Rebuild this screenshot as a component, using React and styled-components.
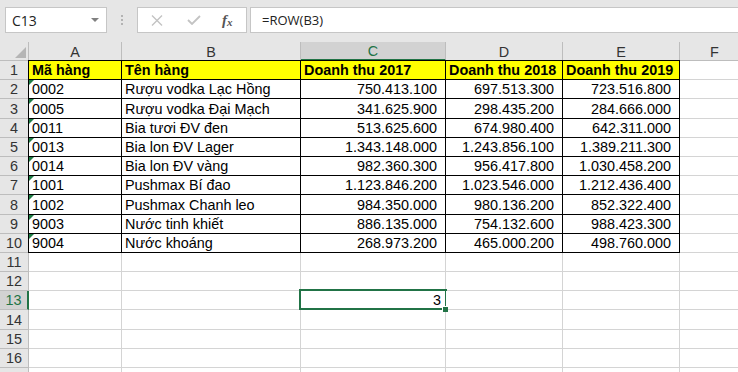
import styled, { createGlobalStyle } from 'styled-components';

const GlobalStyle = createGlobalStyle`
  html, body {
    margin: 0;
    padding: 0;
    background: #ffffff;
    overflow: hidden;
  }
`;

const columns = ['A', 'B', 'C', 'D', 'E', 'F'];
const selectedCol = 'C';
const selectedRow = 13;

const header = ['Mã hàng', 'Tên hàng', 'Doanh thu 2017', 'Doanh thu 2018', 'Doanh thu 2019'];

const data = [
  ['0002', 'Rượu vodka Lạc Hồng', '750.413.100', '697.513.300', '723.516.800'],
  ['0005', 'Rượu vodka Đại Mạch', '341.625.900', '298.435.200', '284.666.000'],
  ['0011', 'Bia tươi ĐV đen', '513.625.600', '674.980.400', '642.311.000'],
  ['0013', 'Bia lon ĐV Lager', '1.343.148.000', '1.243.856.100', '1.389.211.300'],
  ['0014', 'Bia lon ĐV vàng', '982.360.300', '956.417.800', '1.030.458.200'],
  ['1001', 'Pushmax Bí đao', '1.123.846.200', '1.023.546.000', '1.212.436.400'],
  ['1002', 'Pushmax Chanh leo', '984.350.000', '980.136.200', '852.322.400'],
  ['9003', 'Nước tinh khiết', '886.135.000', '754.132.600', '988.423.300'],
  ['9004', 'Nước khoáng', '268.973.200', '465.000.200', '498.760.000'],
];

const TOTAL_ROWS = 17;

export default function App() {
  const rows = [];
  for (let r = 1; r <= TOTAL_ROWS; r++) {
    const inTable = r <= 10;
    const values = r === 1 ? header : data[r - 2] || [];
    rows.push(
      <RowHead key={`h${r}`} $selected={r === selectedRow}>
        {r}
      </RowHead>
    );
    columns.forEach((col, i) => {
      const table = inTable && i < 5;
      let text = values[i] || '';
      let numeric = table && r > 1 && i >= 2;
      const active = r === selectedRow && col === selectedCol;
      if (active) text = '3';
      rows.push(
        <Cell
          key={`${col}${r}`}
          $table={table}
          $yellow={table && r === 1}
          $bold={table && r === 1}
          $firstCol={table && i === 0}
          $firstRow={table && r === 1}
          $warn={table && r > 1 && i === 0}
          $align={numeric ? 'right' : active ? 'active' : 'left'}
          $active={active}
        >
          {text}
        </Cell>
      );
    });
  }

  return (
    <Window>
      <GlobalStyle />
      <FormulaBar>
        <NameBox>
          <span>C13</span>
          <Caret />
        </NameBox>
        <Grip>
          <i />
          <i />
          <i />
        </Grip>
        <ButtonGroup>
          <svg width="12" height="11" viewBox="0 0 12 11">
            <path d="M1 0.5 L11 10.5 M11 0.5 L1 10.5" stroke="#c3c3c3" strokeWidth="1.4" fill="none" />
          </svg>
          <svg width="14" height="10" viewBox="0 0 14 10">
            <path d="M1 5 L5 9 L13 1" stroke="#c3c3c3" strokeWidth="1.8" fill="none" />
          </svg>
          <Fx>
            f<sub>x</sub>
          </Fx>
        </ButtonGroup>
        <FormulaInput>=ROW(B3)</FormulaInput>
      </FormulaBar>

      <Sheet>
        <Corner>
          <svg width="11" height="11" viewBox="0 0 11 11">
            <polygon points="11,0 11,11 0,11" fill="#b5b5b5" />
          </svg>
        </Corner>
        {columns.map((c) => (
          <ColHead key={c} $selected={c === selectedCol}>
            {c}
          </ColHead>
        ))}
        {rows}
      </Sheet>
    </Window>
  );
}

const green = '#217346';
const headerLine = '#bdbdbd';
const gridLine = '#d4d4d4';

const Window = styled.div`
  width: 738px;
  height: 372px;
  overflow: hidden;
  display: flex;
  flex-direction: column;
  background: #ffffff;
`;

const FormulaBar = styled.div`
  height: 42px;
  flex: none;
  display: flex;
  align-items: flex-start;
  padding: 7px 0 0 5px;
  box-sizing: border-box;
  background: #e6e6e6;
  font-family: 'Open Sans', 'Liberation Sans', sans-serif;
  font-size: 13px;
  color: #222;
`;

const NameBox = styled.div`
  width: 102px;
  height: 26px;
  box-sizing: border-box;
  border: 1px solid #c6c6c6;
  background: #fff;
  display: flex;
  align-items: center;
  justify-content: space-between;
  padding: 0 7px 0 6px;
  font-size: 14px;
`;

const Caret = styled.span`
  width: 0;
  height: 0;
  border-left: 4px solid transparent;
  border-right: 4px solid transparent;
  border-top: 4px solid #808080;
`;

const Grip = styled.div`
  margin: 8px 14px 0 14px;
  display: flex;
  flex-direction: column;
  gap: 2px;

  i {
    display: block;
    width: 2px;
    height: 2px;
    background: #b3b3b3;
  }
`;

const ButtonGroup = styled.div`
  width: 110px;
  height: 26px;
  box-sizing: border-box;
  border: 1px solid #c6c6c6;
  background: #fff;
  display: flex;
  align-items: center;
  padding: 0 0 0 13px;
  gap: 0;

  svg:nth-child(1) {
    margin-right: 24px;
  }
  svg:nth-child(2) {
    margin-right: 21px;
  }
`;

const Fx = styled.span`
  font-family: 'Liberation Serif', serif;
  font-style: italic;
  font-weight: bold;
  font-size: 15px;
  color: #555;
  line-height: 1;

  sub {
    font-size: 11px;
    vertical-align: -1px;
  }
`;

const FormulaInput = styled.div`
  flex: 1;
  height: 26px;
  margin-left: 3px;
  box-sizing: border-box;
  border: 1px solid #c6c6c6;
  border-right: none;
  background: #fff;
  display: flex;
  align-items: center;
  padding-left: 11px;
`;

const Sheet = styled.div`
  display: grid;
  grid-template-columns: 29px 93px 179px 145px 117px 117px 70px;
  grid-template-rows: 19px repeat(${TOTAL_ROWS}, 19.2px);
  width: 750px;
  font-family: 'Liberation Sans', Arial, sans-serif;
  font-size: 14.4px;
  color: #000;
`;

const Corner = styled.div`
  background: #e6e6e6;
  border-right: 1px solid ${headerLine};
  border-bottom: 1px solid ${headerLine};
  box-sizing: border-box;
  display: flex;
  align-items: flex-end;
  justify-content: flex-end;
  padding: 0 2px 2px 0;
`;

const ColHead = styled.div`
  box-sizing: border-box;
  background: ${(p) => (p.$selected ? '#d2d2d2' : '#e6e6e6')};
  color: ${(p) => (p.$selected ? green : '#333')};
  border-right: 1px solid ${headerLine};
  border-bottom: ${(p) => (p.$selected ? `2px solid ${green}` : `1px solid ${headerLine}`)};
  display: flex;
  align-items: center;
  justify-content: center;
  padding-top: 1px;
  line-height: 16px;
`;

const RowHead = styled.div`
  box-sizing: border-box;
  background: ${(p) => (p.$selected ? '#d2d2d2' : '#e6e6e6')};
  color: ${(p) => (p.$selected ? green : '#333')};
  border-right: ${(p) => (p.$selected ? `2px solid ${green}` : `1px solid ${headerLine}`)};
  border-bottom: 1px solid ${headerLine};
  display: flex;
  align-items: flex-end;
  justify-content: center;
  line-height: 17px;
`;

const Cell = styled.div`
  position: relative;
  box-sizing: border-box;
  min-width: 0;
  overflow: visible;
  white-space: nowrap;
  background: ${(p) => (p.$yellow ? '#ffff00' : '#ffffff')};
  border-right: 1px solid ${(p) => (p.$table ? '#000' : gridLine)};
  border-bottom: 1px solid ${(p) => (p.$table ? '#000' : gridLine)};
  box-shadow: ${(p) =>
    [p.$firstCol && '-1px 0 0 #000', p.$firstRow && '0 -1px 0 #000', p.$firstCol && p.$firstRow && '-1px -1px 0 #000']
      .filter(Boolean)
      .join(', ') || 'none'};
  font-weight: ${(p) => (p.$bold ? 'bold' : 'normal')};
  display: flex;
  align-items: flex-end;
  justify-content: ${(p) => (p.$align === 'left' ? 'flex-start' : 'flex-end')};
  padding: ${(p) => (p.$align === 'right' ? '0 8px 0 0' : p.$align === 'active' ? '0 4px 0 0' : '0 0 0 3px')};
  line-height: 17px;

  ${(p) =>
    p.$warn &&
    `
    &::before {
      content: '';
      position: absolute;
      top: 0;
      left: 0;
      width: 0;
      height: 0;
      border-top: 5px solid #1e7d45;
      border-right: 5px solid transparent;
    }
  `}

  ${(p) =>
    p.$active &&
    `
    &::after {
      content: '';
      position: absolute;
      top: -2px;
      left: -2px;
      right: -2px;
      bottom: -1px;
      border: 2px solid ${green};
      pointer-events: none;
    }
    &::before {
      content: '';
      position: absolute;
      right: -3px;
      bottom: -3px;
      width: 5px;
      height: 5px;
      background: ${green};
      border-left: 1px solid #fff;
      border-top: 1px solid #fff;
      z-index: 1;
    }
  `}
`;
